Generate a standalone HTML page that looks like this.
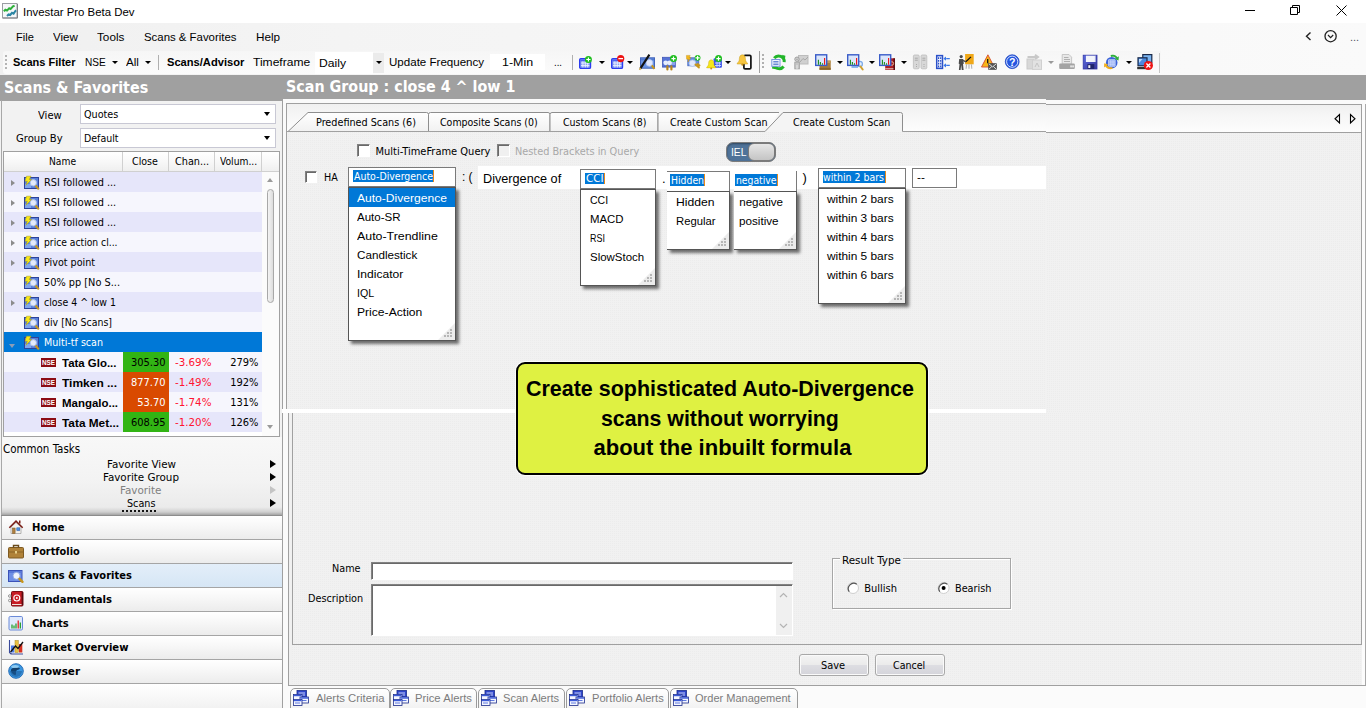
<!DOCTYPE html>
<html lang="en"><head><meta charset="utf-8"><title>Investar Pro Beta Dev</title>
<style>
html,body{margin:0;padding:0;}
body{width:1366px;height:708px;overflow:hidden;background:#f0f0f0;font-family:"Liberation Sans",Arial,sans-serif;font-size:12px;color:#000;}
#app{position:relative;width:1366px;height:708px;overflow:hidden;background:#f0f0f0;}
.a{position:absolute;box-sizing:border-box;}
.t{position:absolute;white-space:pre;transform-origin:0 50%;}
.fl{font-family:"Liberation Sans",Arial,sans-serif;}
.fd{font-family:"DejaVu Sans Condensed","Liberation Sans",Arial,sans-serif;}
svg{position:absolute;overflow:visible;}
.dot{background-color:#f1f1f1;background-image:conic-gradient(#ececec 25%,transparent 0);background-size:2px 2px;}
.dd{width:0;height:0;border-left:3px solid transparent;border-right:3px solid transparent;border-top:3px solid #000;}
.pop{background:#fff;border:1px solid #555;box-shadow:3px 3px 3px rgba(0,0,0,.55);}
.grip{position:absolute;right:0;bottom:0;width:0;height:0;border-left:17px solid transparent;border-bottom:17px solid #e4e4e4;}
.nav{height:24px;border-bottom:1px solid #a5a5a5;border-right:1px solid #a0a0a0;background:linear-gradient(#ffffff,#f7f7f7 45%,#ececec);}
.nav.sel{background:linear-gradient(#e3eef9,#d6e6f5);}
.btn{border:1px solid #a8a8a8;border-radius:3px;background:linear-gradient(#f4f4f4,#ebebeb 48%,#dddde2 52%,#d4d4da);box-shadow:inset 0 0 0 1px #fafafa;}
.sunk{background:#fff;border:1px solid;border-color:#828282 #fff #fff #828282;box-shadow:inset 1px 1px 0 #696969;}

</style></head>
<body>
<div id="app">
<div class="a " style="left:0px;top:0px;width:1366px;height:23px;background:#fff;"></div>
<svg style="left:2px;top:3px" width="16" height="16" viewBox="0 0 16 16"><rect x="0.5" y="0.5" width="14.500" height="14.500" fill="#f6f7f9" stroke="#9a9da2"/><path d="M1 15h14.500V1" fill="none" stroke="#7c7f84"/><polyline points="1.800,8.200 3.400,6.800 5,7.600 7.200,5.200 8.600,6 11,3.400 12.600,2.800" fill="none" stroke="#2eb03a" stroke-width="2"/><polyline points="5,13 6.600,11.400 8.200,12 10,9.800 11.600,10.600 13.400,8 14.200,7.400" fill="none" stroke="#2c86a4" stroke-width="2"/></svg>
<span class="t fl" style="left:23.0px;top:3.5px;font-size:11.4px;line-height:16px;">Investar Pro Beta Dev</span>
<svg style="left:1240px;top:0" width="126" height="23" viewBox="0 0 126 23" fill="none" stroke="#000" stroke-width="1"><path d="M5 10.5h10"/><path d="M50.5 7.5h7v7h-7z"/><path d="M52.5 7.5v-2h7v7h-2"/><path d="M96.5 5.5l10 10M106.5 5.5l-10 10"/></svg>
<div class="a " style="left:0px;top:23px;width:1366px;height:27px;background:linear-gradient(90deg,#f0f0f0,#f4f4f4 25%,#fafafa);"></div>
<span class="t fl" style="left:16.2px;top:28.6px;font-size:11.5px;line-height:16px;transform:scaleX(0.9605);">File</span>
<span class="t fl" style="left:53.0px;top:28.6px;font-size:11.5px;line-height:16px;transform:scaleX(1.0073);">View</span>
<span class="t fl" style="left:97.0px;top:28.6px;font-size:11.5px;line-height:16px;transform:scaleX(1.0201);">Tools</span>
<span class="t fl" style="left:143.8px;top:28.6px;font-size:11.5px;line-height:16px;transform:scaleX(0.9911);">Scans &amp; Favorites</span>
<span class="t fl" style="left:256.2px;top:28.6px;font-size:11.5px;line-height:16px;transform:scaleX(1.0188);">Help</span>
<svg style="left:1300px;top:26px" width="66" height="22" viewBox="0 0 66 22" fill="none" stroke="#222" stroke-width="1.4"><path d="M10.5 6.5l-4 3.7 4 3.7"/><circle cx="30.6" cy="10.2" r="5.6" stroke-width="1.3"/><path d="M28 9l2.6 2.6L33.200 9" stroke-width="1.2"/></svg>
<span class="t fl" style="left:1350.0px;top:29.0px;font-size:11px;line-height:16px;color:#556;">...</span>
<div class="a " style="left:0px;top:50px;width:1366px;height:25px;background:linear-gradient(90deg,#f0f0f0,#f4f4f4 25%,#fafafa);"></div>
<div class="a " style="left:3px;top:51px;width:1158px;height:23px;background:linear-gradient(#f6f6f6,#fbfbfb);border-radius:3px 0 0 3px;"></div>
<div class="a " style="left:5px;top:55px;width:2px;height:2px;background:#b4b4b4;"></div>
<div class="a " style="left:5px;top:59px;width:2px;height:2px;background:#b4b4b4;"></div>
<div class="a " style="left:5px;top:63px;width:2px;height:2px;background:#b4b4b4;"></div>
<div class="a " style="left:5px;top:67px;width:2px;height:2px;background:#b4b4b4;"></div>
<span class="t fl" style="left:12.9px;top:54.2px;font-size:11.5px;line-height:16px;font-weight:bold;transform:scaleX(0.9585);">Scans Filter</span>
<span class="t fl" style="left:85.0px;top:54.2px;font-size:11.5px;line-height:16px;transform:scaleX(0.8750);">NSE</span>
<div class="a dd" style="left:112px;top:61px;width:0px;height:0px;"></div>
<span class="t fl" style="left:126.4px;top:54.2px;font-size:11.5px;line-height:16px;transform:scaleX(1.0093);">All</span>
<div class="a dd" style="left:145px;top:61px;width:0px;height:0px;"></div>
<div class="a " style="left:158px;top:55px;width:1px;height:15px;background:#b0b0b0;"></div>
<span class="t fl" style="left:167.2px;top:54.2px;font-size:11.5px;line-height:16px;font-weight:bold;transform:scaleX(0.9674);">Scans/Advisor</span>
<span class="t fl" style="left:252.5px;top:54.2px;font-size:11.5px;line-height:16px;transform:scaleX(1.0489);">Timeframe</span>
<div class="a " style="left:315px;top:52px;width:58px;height:22px;background:#fff;"></div>
<div class="a " style="left:373px;top:53px;width:11px;height:20px;background:#ebebeb;"></div>
<span class="t fl" style="left:319.0px;top:54.6px;font-size:11.5px;line-height:16px;transform:scaleX(1.0562);">Daily</span>
<div class="a dd" style="left:376px;top:61px;width:0px;height:0px;"></div>
<span class="t fl" style="left:389.3px;top:54.2px;font-size:11.5px;line-height:16px;transform:scaleX(1.0050);">Update Frequency</span>
<div class="a " style="left:490px;top:54px;width:55px;height:16px;background:#fff;"></div>
<span class="t fl" style="left:501.8px;top:54.2px;font-size:11.5px;line-height:16px;transform:scaleX(1.0812);">1-Min</span>
<span class="t fl" style="left:553.5px;top:54.2px;font-size:11.5px;line-height:16px;transform:scaleX(0.8339);">...</span>
<div class="a " style="left:572px;top:55px;width:1px;height:15px;background:#b0b0b0;"></div>
<div class="a " style="left:759px;top:51px;width:1px;height:22px;background:#a0a0a0;"></div>
<div class="a " style="left:762px;top:54px;width:2px;height:2px;background:#b0b0b0;"></div>
<div class="a " style="left:762px;top:58px;width:2px;height:2px;background:#b0b0b0;"></div>
<div class="a " style="left:762px;top:62px;width:2px;height:2px;background:#b0b0b0;"></div>
<div class="a " style="left:762px;top:66px;width:2px;height:2px;background:#b0b0b0;"></div>
<div class="a " style="left:1159px;top:53px;width:1px;height:20px;background:#c6c6c6;"></div>
<div class="a dd" style="left:598.5px;top:61px;width:0px;height:0px;"></div>
<div class="a dd" style="left:626.5px;top:61px;width:0px;height:0px;"></div>
<div class="a dd" style="left:724.7px;top:61px;width:0px;height:0px;"></div>
<div class="a dd" style="left:836.5px;top:61px;width:0px;height:0px;"></div>
<div class="a dd" style="left:868.5px;top:61px;width:0px;height:0px;"></div>
<div class="a dd" style="left:900.5px;top:61px;width:0px;height:0px;"></div>
<div class="a dd" style="left:1125.5px;top:61px;width:0px;height:0px;"></div>
<div class="a dd" style="left:1047.5px;top:61px;width:0px;height:0px;border-top-color:#9a9a9a;"></div>
<svg style="left:579px;top:54px" width="16" height="16" viewBox="0 0 16 16"><rect x="0.7" y="4.6" width="10.8" height="9.8" rx="1.2" fill="#8aa2f4" stroke="#2b3cf0" stroke-width="1.4"/><path d="M1.400 6.300h9.400" stroke="#4a62f0" stroke-width="1.600"/><path d="M2 9h8.400M2 11.600h8.400M3.900 7.400v6M6.300 7.400v6M8.700 7.400v6" stroke="#eef3ff" stroke-width=".9"/><circle cx="9.4" cy="5.5" r="3.5" fill="#1fbe1f"/><path d="M7.300000000000001 5.5h4.2M9.4 3.4v4.2" stroke="#fff" stroke-width="1.15"/></svg>
<svg style="left:611px;top:54px" width="16" height="16" viewBox="0 0 16 16"><rect x="0.7" y="4.6" width="10.8" height="9.8" rx="1.2" fill="#8aa2f4" stroke="#2b3cf0" stroke-width="1.4"/><path d="M1.400 6.300h9.400" stroke="#4a62f0" stroke-width="1.600"/><path d="M2 9h8.400M2 11.600h8.400M3.900 7.400v6M6.300 7.400v6M8.700 7.400v6" stroke="#eef3ff" stroke-width=".9"/><circle cx="9.7" cy="4.6" r="3.6" fill="#ee1212"/><path d="M7.3999999999999995 4.6h4.6" stroke="#fff" stroke-width="1.3"/></svg>
<svg style="left:639px;top:54px" width="16" height="16" viewBox="0 0 16 16"><rect x="1.5" y="3.8" width="14" height="10.400" fill="#6a94e4" stroke="#4465b8"/><rect x="2" y="4.300" width="13" height="2" fill="#5078d0"/><circle cx="10.400" cy="8.900" r="3.300" fill="#e2e9fc" stroke="#b6c8f0" stroke-width=".8"/><path d="M12.800 11.400l2.600 3.500" stroke="#c8961c" stroke-width="2.100"/><path d="M1.300 14.600L10.400 0.600" stroke="#111" stroke-width="2.100"/><path d="M0.500 15.800l1.200-1.900" stroke="#c8a040" stroke-width="1.600"/></svg>
<svg style="left:662px;top:54px" width="16" height="16" viewBox="0 0 16 16"><rect x="0.500" y="3.300" width="12.800" height="9.800" fill="#5673d6" stroke="#4058b8" stroke-width=".8"/><rect x="8" y="6" width="5" height="5" fill="#8aa4ea"/><circle cx="3.700" cy="8.800" r="2.400" fill="#e8eefc"/><circle cx="7.500" cy="8.800" r="2.400" fill="#e8eefc"/><path d="M5.400 12.300v3.200M9.400 12.300v3.200" stroke="#b8861c" stroke-width="2.200" stroke-linecap="round"/><circle cx="11.5" cy="4.6" r="3.5" fill="#1fbe1f"/><path d="M9.4 4.6h4.2M11.5 2.4999999999999996v4.2" stroke="#fff" stroke-width="1.15"/></svg>
<svg style="left:686px;top:54px" width="16" height="16" viewBox="0 0 16 16"><rect x="1.800" y="3.800" width="11" height="8" fill="#6a8fe0" stroke="#4668c0" stroke-width=".8"/><circle cx="6.400" cy="9.200" r="3.300" fill="#e3eafb" stroke="#a9c0ea" stroke-width=".8"/><path d="M0.400 1.400h3.800l-1 2h1.800L1.800 8l.8-2.800H0.600z" fill="#f4b81c" stroke="#c08a10" stroke-width=".4"/><path d="M9.500 10.500l3.400 3M11.500 10l2 1.500" stroke="#c8961c" stroke-width="1.900" stroke-linecap="round"/><circle cx="11.6" cy="3.8" r="2.9" fill="#1fbe1f"/><path d="M9.5 3.8h4.2M11.6 1.6999999999999997v4.2" stroke="#fff" stroke-width="1.15"/></svg>
<svg style="left:706px;top:54px" width="16" height="16" viewBox="0 0 16 16"><rect x="7.600" y="4.300" width="8.300" height="9.400" rx="1" fill="#3a52e8"/><path d="M9 9h6M9 11.500h6M11 7.500v5.500M13.300 7.500v5.500" stroke="#cfe0ff" stroke-width=".9"/><g transform="translate(0.7,5.6) scale(0.9)"><path d="M5 0.300c1.900 0 2.900 1.500 2.900 3.600 0 2.400.8 3.400 2.100 4.400v.9H0v-.9c1.300-1 2.100-2 2.100-4.400C2.100 1.800 3.100.3 5 .3z" fill="#f5e71a" stroke="#c09a10" stroke-width=".4"/><circle cx="5" cy="9.800" r="1.100" fill="#c8901c"/></g><circle cx="12.5" cy="4.6" r="3.5" fill="#1fbe1f"/><path d="M10.4 4.6h4.2M12.5 2.4999999999999996v4.2" stroke="#fff" stroke-width="1.15"/></svg>
<svg style="left:737px;top:54px" width="16" height="16" viewBox="0 0 16 16"><rect x="6.900" y="1.300" width="7" height="13.600" rx="1.200" fill="#fff" stroke="#111" stroke-width="1.700"/><g transform="translate(0.2,0.5) scale(1.04)"><path d="M5 0.300c1.900 0 2.900 1.500 2.900 3.600 0 2.400.8 3.400 2.100 4.400v.9H0v-.9c1.300-1 2.100-2 2.100-4.400C2.100 1.800 3.100.3 5 .3z" fill="#f6c540" stroke="#c09a10" stroke-width=".4"/><circle cx="5" cy="9.800" r="1.100" fill="#c8901c"/></g></svg>
<svg style="left:771px;top:54px" width="16" height="16" viewBox="0 0 16 16"><path d="M13.200 8.200A5.600 5.600 0 0 0 3.200 4.200" fill="none" stroke="#22b52a" stroke-width="3"/><path d="M10.800 0.800l3.600 1-0.600 4.200z" fill="#22b52a"/><path d="M2.600 9A5.600 5.600 0 0 0 12.600 12.500" fill="none" stroke="#22b52a" stroke-width="3"/><path d="M4.800 15.200l-3.800-.6.600-4.200z" fill="#22b52a"/><rect x="0.800" y="5.500" width="8.200" height="6.800" fill="#f2f5fd" stroke="#7a96e0"/><path d="M2.300 7.500h5.200M2.300 9h5.200M2.300 10.500h5.200" stroke="#5b7ed0" stroke-width=".9"/></svg>
<svg style="left:794px;top:54px" width="16" height="16" viewBox="0 0 16 16"><rect x="4.500" y="1.500" width="9.500" height="8.500" fill="#d0d0d0" stroke="#bcbcbc"/><path d="M6 8l3-3.500 2 1.500 3-3" stroke="#a8a8a8" fill="none"/><circle cx="3" cy="5.200" r="2.200" fill="#d6d6d6" stroke="#9c9c9c"/><circle cx="3" cy="5.200" r=".8" fill="#9c9c9c"/><rect x="0.800" y="8.200" width="4.600" height="6.600" fill="#c6c6c6" stroke="#a8a8a8"/><path d="M3 11v4" stroke="#e8e8e8"/></svg>
<svg style="left:815px;top:54px" width="16" height="16" viewBox="0 0 16 16"><rect x="4.500" y="6.600" width="11.200" height="9.200" fill="#a87c3a"/><rect x="4.500" y="6.600" width="11.200" height="2.400" fill="#c09a5a"/><rect x="4.500" y="13.800" width="11.200" height="2" fill="#8a6428"/><rect x="0.700" y="0.800" width="11" height="10.600" fill="#dbe6fb" stroke="#3a5cc8" stroke-width="1.400"/><path d="M3.400 10.700V5.800M5.400 10.700V8M7.500 10.700V9.200" stroke="#1a8c1a" stroke-width="1.100"/><path d="M9.600 10.700V4" stroke="#ee1010" stroke-width="1.100"/></svg>
<svg style="left:847px;top:54px" width="16" height="16" viewBox="0 0 16 16"><rect x="4.500" y="11.800" width="6.500" height="2.200" fill="#8ab8ee"/><circle cx="12.800" cy="10" r="2.600" fill="#e2eefc" stroke="#7aa8e8" stroke-width="1.200"/><path d="M13.500 12.500l2.200 3" stroke="#d0a030" stroke-width="2" stroke-linecap="round"/><rect x="0.700" y="0.800" width="11" height="10.600" fill="#dbe6fb" stroke="#3a5cc8" stroke-width="1.400"/><path d="M3.400 10.700V5.800M5.400 10.700V8M7.500 10.700V9.200" stroke="#1a8c1a" stroke-width="1.100"/><path d="M9.600 10.700V4" stroke="#ee1010" stroke-width="1.100"/></svg>
<svg style="left:879px;top:54px" width="16" height="16" viewBox="0 0 16 16"><rect x="6.200" y="4.300" width="9.600" height="11.700" fill="#b01c24"/><rect x="14.400" y="4.300" width="1.600" height="11.700" fill="#5a0c10"/><circle cx="12.800" cy="9.500" r="1.800" fill="none" stroke="#f0c8a0" stroke-width=".9"/><rect x="6.200" y="14.300" width="8.200" height="1" fill="#e8d8c8"/><rect x="0.700" y="0.800" width="11" height="10.600" fill="#dbe6fb" stroke="#3a5cc8" stroke-width="1.400"/><path d="M3.400 10.700V5.800M5.400 10.700V8M7.500 10.700V9.200" stroke="#1a8c1a" stroke-width="1.100"/><path d="M9.600 10.700V4" stroke="#ee1010" stroke-width="1.100"/></svg>
<svg style="left:913px;top:54px" width="16" height="16" viewBox="0 0 16 16"><rect x="0.400" y="1" width="5.800" height="13.800" rx="1.200" fill="#d8d8d8" stroke="#bdbdbd" stroke-width=".8"/><rect x="8" y="1" width="5.800" height="13.800" rx="1.200" fill="#d8d8d8" stroke="#bdbdbd" stroke-width=".8"/><path d="M1.800 4.200h3M1.800 6.200h3M9.400 4.200h3M9.400 6.200h3" stroke="#a8a8a8"/><path d="M3 10.500h.8M3 12.500h.8M10.600 10.500h.8M10.600 12.500h.8" stroke="#a0a0a0"/></svg>
<svg style="left:936px;top:54px" width="16" height="16" viewBox="0 0 16 16"><rect x="0.700" y="1.600" width="5.800" height="12.800" fill="#f0f4ff" stroke="#2a50c8" stroke-width="1.500"/><path d="M2.600 3.200v10M4.700 3.200v10" stroke="#2a50c8" stroke-width="1.200" stroke-dasharray="1.700 1.100"/><path d="M13.800 4.600h-5.500M13.800 11.400h-5.500" stroke="#3b78e8" stroke-width="1.200" stroke-dasharray="3.600 1 1 1"/><path d="M10 2.400L7.400 4.600 10 6.800zM10 9.200l-2.600 2.200 2.600 2.200z" fill="#3b78e8"/></svg>
<svg style="left:958px;top:54px" width="16" height="16" viewBox="0 0 16 16"><rect x="7.100" y="0" width="8.600" height="10.300" fill="#f0a818"/><path d="M7.800 7.700l5.200-4.800" stroke="#111" stroke-width="1.200"/><path d="M8.600 10.300l-.5 4.500M11 10.300v4.500M13.400 10.300l.4 4.500" stroke="#b4b4b4" stroke-width="1.100"/><circle cx="3.200" cy="2.600" r="1.600" fill="#4a4a4a"/><path d="M1.200 5h4l.6 4.800-.8.200.6 6H3.800l-.6-5-.6 5H0.900l.6-6-.8-.2z" fill="#4a4a4a"/><path d="M5 6.300l3 1.500" stroke="#4a4a4a" stroke-width="1.300"/></svg>
<svg style="left:981px;top:54px" width="16" height="16" viewBox="0 0 16 16"><path d="M6.900 0.800L13.200 13H0.500z" fill="#f7b518" stroke="#d8583a" stroke-width="1" stroke-linejoin="round"/><path d="M6.700 5v4.300" stroke="#111" stroke-width="1.300"/><rect x="7.600" y="9.500" width="8" height="6" fill="#555" stroke="#444" stroke-width=".6"/><path d="M7.800 9.700l3.800 3.200 3.800-3.200M7.800 15.300l3-2.800M15.400 15.300l-3-2.800" fill="none" stroke="#fff" stroke-width=".8"/></svg>
<svg style="left:1004px;top:54px" width="16" height="16" viewBox="0 0 16 16"><circle cx="8.200" cy="7.700" r="6.900" fill="#2456e0" stroke="#1c44c0" stroke-width=".8"/><circle cx="8.200" cy="7.700" r="5.600" fill="none" stroke="#e8eeff" stroke-width=".9"/><text x="8.200" y="11.500" text-anchor="middle" font-family="Liberation Sans" font-weight="bold" font-size="10.500" fill="#fff">?</text></svg>
<svg style="left:1026px;top:54px" width="16" height="16" viewBox="0 0 16 16"><path d="M1.500 3h9.500M9 0.800l3 2.200-3 2.200" fill="none" stroke="#c8c8c8" stroke-width="2"/><rect x="1" y="5" width="7" height="10" fill="#d8d8d8" stroke="#cacaca"/><rect x="6.500" y="6" width="9" height="9.400" fill="#e2e2e2" stroke="#d0d0d0"/><path d="M9 13l2-4 2 4" fill="none" stroke="#c4c4c4"/></svg>
<svg style="left:1059px;top:54px" width="16" height="16" viewBox="0 0 16 16"><path d="M3.200 0.500h6.800l2.600 2.600v7H3.200z" fill="#e8e8e8" stroke="#bcbcbc" stroke-width=".8"/><path d="M5 3.500h4.500M5 5.500h6M5 7.500h6" stroke="#b0b0b0"/><rect x="0.200" y="9.600" width="15.600" height="5.400" rx="1" fill="#a4a4a4"/><rect x="11.400" y="11.400" width="1.300" height="2" fill="#fff"/><rect x="13.400" y="11.400" width="1.300" height="2" fill="#fff"/></svg>
<svg style="left:1082px;top:54px" width="16" height="16" viewBox="0 0 16 16"><defs><linearGradient id="fg" x1="0" y1="0" x2="1" y2="1"><stop offset="0" stop-color="#5a6ae0"/><stop offset="1" stop-color="#3a389c"/></linearGradient></defs><rect x="1.200" y="1.200" width="13.800" height="13.800" fill="url(#fg)" stroke="#3238a8" stroke-width=".8"/><rect x="3.900" y="1.700" width="9.500" height="6.300" fill="#f2f4fb"/><path d="M13.400 1.700v6.300" stroke="#a8b0e0"/><rect x="5.500" y="10.100" width="6.800" height="4.800" fill="#20246a"/><rect x="6.300" y="11.200" width="2" height="2.800" fill="#f0f0f8"/></svg>
<svg style="left:1104px;top:54px" width="16" height="16" viewBox="0 0 16 16"><circle cx="7.700" cy="8.700" r="5.800" fill="#3a62d8"/><path d="M4.700 5.800h6.400v6.400H4.700zM4.700 8h6.400M4.700 10.100h6.400M6.900 5.800v6.400M9 5.800v6.400" fill="#6a8cf0" stroke="#e4ecff" stroke-width=".8"/><path d="M6.500 1.300c3.200-1.100 5.600-.2 6.900 1.900l1.500-.9-.4 4.200-3.700-1.400 1.200-.9c-.9-1.300-2.500-1.900-4.900-1.300z" fill="#2eb03a"/><path d="M0.200 9.200l3.800 1.100-1.100 1c1 1.500 3 2.300 5.500 2v1.800c-3.500.6-6-.7-7.100-2.600l-1.300 1z" fill="#f0b020"/></svg>
<svg style="left:1137px;top:54px" width="16" height="16" viewBox="0 0 16 16"><rect x="5.800" y="0.600" width="9" height="8.400" fill="#7ab4f0" stroke="#1a2a4a" stroke-width="1.200"/><rect x="1" y="3.800" width="9" height="8" fill="#4a8ae0" stroke="#1a2a4a" stroke-width="1.200"/><path d="M2 5l3.500 0-3.500 4z" fill="#bcd8f8"/><rect x="0.200" y="13" width="10.800" height="2.200" fill="#333"/><circle cx="11.400" cy="11.500" r="4.600" fill="#ee1414"/><path d="M9.400 9.500l4 4M13.400 9.500l-4 4" stroke="#fff" stroke-width="1.300"/></svg>
<div class="a " style="left:0px;top:75px;width:1046px;height:24px;background:#a0a0a0;"></div>
<div class="a " style="left:1046px;top:75px;width:320px;height:25px;background:#a0a0a0;"></div>
<span class="t fd" style="left:4.0px;top:77.0px;font-size:15.9px;line-height:22px;font-weight:bold;color:#fff;">Scans &amp; Favorites</span>
<span class="t fd" style="left:286.0px;top:76.0px;font-size:15.9px;line-height:22px;font-weight:bold;color:#fff;">Scan Group : close 4 ^ low 1</span>
<div class="a " style="left:0px;top:99px;width:283px;height:609px;background:#f2f2f2;"></div>
<div class="a " style="left:0px;top:99px;width:283px;height:2px;background:#a0a0a0;"></div>
<div class="a " style="left:1px;top:100px;width:1px;height:608px;background:#a8a8a8;"></div>
<div class="a " style="left:282px;top:99px;width:1px;height:609px;background:#a0a0a0;"></div>
<span class="t fd" style="left:38.2px;top:108.3px;font-size:11px;line-height:16px;transform:scaleX(1.0141);">View</span>
<div class="a " style="left:80px;top:104px;width:196px;height:20px;background:#fff;border:1px solid #c8c8d4;"></div>
<span class="t fd" style="left:84.0px;top:106.6px;font-size:11px;line-height:16px;transform:scaleX(0.9730);">Quotes</span>
<div class="a" style="left:264px;top:112px;width:0;height:0;border-left:3.5px solid transparent;border-right:3.5px solid transparent;border-top:4px solid #000"></div>
<span class="t fd" style="left:16.0px;top:131.3px;font-size:11px;line-height:16px;transform:scaleX(1.0155);">Group By</span>
<div class="a " style="left:80px;top:128px;width:196px;height:20px;background:#fff;border:1px solid #c8c8d4;"></div>
<span class="t fd" style="left:84.0px;top:130.6px;font-size:11px;line-height:16px;transform:scaleX(0.9538);">Default</span>
<div class="a" style="left:264px;top:136px;width:0;height:0;border-left:3.5px solid transparent;border-right:3.5px solid transparent;border-top:4px solid #000"></div>
<div class="a " style="left:3px;top:151px;width:277px;height:286px;background:#fff;border:1px solid #a0a0a0;"></div>
<div class="a " style="left:4px;top:152px;width:275px;height:20px;background:linear-gradient(#ffffff,#f8f8f8 50%,#efefef);border-bottom:1px solid #d0d0d0;"></div>
<div class="a " style="left:122px;top:152px;width:1px;height:19px;background:#d0d0d0;"></div>
<div class="a " style="left:168px;top:152px;width:1px;height:19px;background:#d0d0d0;"></div>
<div class="a " style="left:214px;top:152px;width:1px;height:19px;background:#d0d0d0;"></div>
<div class="a " style="left:261px;top:152px;width:1px;height:19px;background:#d0d0d0;"></div>
<span class="t fd" style="left:49.3px;top:154.1px;font-size:11px;line-height:16px;transform:scaleX(0.9280);">Name</span>
<span class="t fd" style="left:132.3px;top:154.1px;font-size:11px;line-height:16px;transform:scaleX(0.9604);">Close</span>
<span class="t fd" style="left:174.5px;top:154.1px;font-size:11px;line-height:16px;transform:scaleX(0.9785);">Chan...</span>
<span class="t fd" style="left:219.7px;top:154.1px;font-size:11px;line-height:16px;transform:scaleX(0.9285);">Volum...</span>
<div class="a " style="left:262px;top:172px;width:17px;height:264px;background:#fbfbfb;"></div>
<div class="a " style="left:4px;top:172px;width:258px;height:20px;background:#e6e6fa;"></div>
<div class="a" style="left:11px;top:179.5px;width:0;height:0;border-top:3px solid transparent;border-bottom:3px solid transparent;border-left:4px solid #8c8c8c"></div>
<svg style="left:24px;top:175px" width="16" height="16" viewBox="0 0 16 16"><rect x="0.5" y="2.5" width="14" height="11" fill="#5a80d8" stroke="#2c429c"/><rect x="1" y="9" width="6" height="4" fill="#80a6ec"/><circle cx="9.3" cy="7.8" r="3.2" fill="#e4ebfb" stroke="#a8bce8"/><path d="M11.5 10.5l3.3 3.8" stroke="#c8961c" stroke-width="2"/><path d="M2.5 1.2h4.5L5.200 4.500h2.300L2 10.200l1.300-4H1z" fill="#f7e818" stroke="#a89a10" stroke-width=".5"/></svg>
<span class="t fd" style="left:43.5px;top:174.8px;font-size:11px;line-height:16px;transform:scaleX(0.9844);">RSI followed ...</span>
<div class="a " style="left:4px;top:192px;width:258px;height:20px;background:#f6f6fd;"></div>
<div class="a" style="left:11px;top:199.5px;width:0;height:0;border-top:3px solid transparent;border-bottom:3px solid transparent;border-left:4px solid #8c8c8c"></div>
<svg style="left:24px;top:195px" width="16" height="16" viewBox="0 0 16 16"><rect x="0.5" y="2.5" width="14" height="11" fill="#5a80d8" stroke="#2c429c"/><rect x="1" y="9" width="6" height="4" fill="#80a6ec"/><circle cx="9.3" cy="7.8" r="3.2" fill="#e4ebfb" stroke="#a8bce8"/><path d="M11.5 10.5l3.3 3.8" stroke="#c8961c" stroke-width="2"/><path d="M2.5 1.2h4.5L5.200 4.500h2.300L2 10.200l1.300-4H1z" fill="#f7e818" stroke="#a89a10" stroke-width=".5"/></svg>
<span class="t fd" style="left:43.5px;top:194.8px;font-size:11px;line-height:16px;transform:scaleX(0.9844);">RSI followed ...</span>
<div class="a " style="left:4px;top:212px;width:258px;height:20px;background:#e6e6fa;"></div>
<div class="a" style="left:11px;top:219.5px;width:0;height:0;border-top:3px solid transparent;border-bottom:3px solid transparent;border-left:4px solid #8c8c8c"></div>
<svg style="left:24px;top:215px" width="16" height="16" viewBox="0 0 16 16"><rect x="0.5" y="2.5" width="14" height="11" fill="#5a80d8" stroke="#2c429c"/><rect x="1" y="9" width="6" height="4" fill="#80a6ec"/><circle cx="9.3" cy="7.8" r="3.2" fill="#e4ebfb" stroke="#a8bce8"/><path d="M11.5 10.5l3.3 3.8" stroke="#c8961c" stroke-width="2"/><path d="M2.5 1.2h4.5L5.200 4.500h2.300L2 10.200l1.300-4H1z" fill="#f7e818" stroke="#a89a10" stroke-width=".5"/></svg>
<span class="t fd" style="left:43.5px;top:214.8px;font-size:11px;line-height:16px;transform:scaleX(0.9844);">RSI followed ...</span>
<div class="a " style="left:4px;top:232px;width:258px;height:20px;background:#f6f6fd;"></div>
<div class="a" style="left:11px;top:239.5px;width:0;height:0;border-top:3px solid transparent;border-bottom:3px solid transparent;border-left:4px solid #8c8c8c"></div>
<svg style="left:24px;top:235px" width="16" height="16" viewBox="0 0 16 16"><rect x="0.5" y="2.5" width="14" height="11" fill="#5a80d8" stroke="#2c429c"/><rect x="1" y="9" width="6" height="4" fill="#80a6ec"/><circle cx="9.3" cy="7.8" r="3.2" fill="#e4ebfb" stroke="#a8bce8"/><path d="M11.5 10.5l3.3 3.8" stroke="#c8961c" stroke-width="2"/><path d="M2.5 1.2h4.5L5.200 4.500h2.300L2 10.200l1.300-4H1z" fill="#f7e818" stroke="#a89a10" stroke-width=".5"/></svg>
<span class="t fd" style="left:43.5px;top:234.8px;font-size:11px;line-height:16px;transform:scaleX(0.9304);">price action cl...</span>
<div class="a " style="left:4px;top:252px;width:258px;height:20px;background:#e6e6fa;"></div>
<div class="a" style="left:11px;top:259.5px;width:0;height:0;border-top:3px solid transparent;border-bottom:3px solid transparent;border-left:4px solid #8c8c8c"></div>
<svg style="left:24px;top:255px" width="16" height="16" viewBox="0 0 16 16"><rect x="0.5" y="2.5" width="14" height="11" fill="#5a80d8" stroke="#2c429c"/><rect x="1" y="9" width="6" height="4" fill="#80a6ec"/><circle cx="9.3" cy="7.8" r="3.2" fill="#e4ebfb" stroke="#a8bce8"/><path d="M11.5 10.5l3.3 3.8" stroke="#c8961c" stroke-width="2"/><path d="M2.5 1.2h4.5L5.200 4.500h2.300L2 10.200l1.300-4H1z" fill="#f7e818" stroke="#a89a10" stroke-width=".5"/></svg>
<span class="t fd" style="left:43.5px;top:254.8px;font-size:11px;line-height:16px;transform:scaleX(0.9685);">Pivot point</span>
<div class="a " style="left:4px;top:272px;width:258px;height:20px;background:#f6f6fd;"></div>
<svg style="left:24px;top:275px" width="16" height="16" viewBox="0 0 16 16"><rect x="0.5" y="2.5" width="14" height="11" fill="#5a80d8" stroke="#2c429c"/><rect x="1" y="9" width="6" height="4" fill="#80a6ec"/><circle cx="9.3" cy="7.8" r="3.2" fill="#e4ebfb" stroke="#a8bce8"/><path d="M11.5 10.5l3.3 3.8" stroke="#c8961c" stroke-width="2"/><path d="M2.5 1.2h4.5L5.200 4.500h2.300L2 10.200l1.300-4H1z" fill="#f7e818" stroke="#a89a10" stroke-width=".5"/></svg>
<span class="t fd" style="left:43.5px;top:274.8px;font-size:11px;line-height:16px;transform:scaleX(0.9866);">50% pp [No S...</span>
<div class="a " style="left:4px;top:292px;width:258px;height:20px;background:#e6e6fa;"></div>
<div class="a" style="left:11px;top:299.5px;width:0;height:0;border-top:3px solid transparent;border-bottom:3px solid transparent;border-left:4px solid #8c8c8c"></div>
<svg style="left:24px;top:295px" width="16" height="16" viewBox="0 0 16 16"><rect x="0.5" y="2.5" width="14" height="11" fill="#5a80d8" stroke="#2c429c"/><rect x="1" y="9" width="6" height="4" fill="#80a6ec"/><circle cx="9.3" cy="7.8" r="3.2" fill="#e4ebfb" stroke="#a8bce8"/><path d="M11.5 10.5l3.3 3.8" stroke="#c8961c" stroke-width="2"/><path d="M2.5 1.2h4.5L5.200 4.500h2.300L2 10.200l1.300-4H1z" fill="#f7e818" stroke="#a89a10" stroke-width=".5"/></svg>
<span class="t fd" style="left:43.5px;top:294.8px;font-size:11px;line-height:16px;transform:scaleX(0.9493);">close 4 ^ low 1</span>
<div class="a " style="left:4px;top:312px;width:258px;height:20px;background:#f6f6fd;"></div>
<svg style="left:24px;top:315px" width="16" height="16" viewBox="0 0 16 16"><rect x="0.5" y="2.5" width="14" height="11" fill="#5a80d8" stroke="#2c429c"/><rect x="1" y="9" width="6" height="4" fill="#80a6ec"/><circle cx="9.3" cy="7.8" r="3.2" fill="#e4ebfb" stroke="#a8bce8"/><path d="M11.5 10.5l3.3 3.8" stroke="#c8961c" stroke-width="2"/><path d="M2.5 1.2h4.5L5.200 4.500h2.300L2 10.200l1.300-4H1z" fill="#f7e818" stroke="#a89a10" stroke-width=".5"/></svg>
<span class="t fd" style="left:43.5px;top:314.8px;font-size:11px;line-height:16px;transform:scaleX(0.9500);">div [No Scans]</span>
<div class="a " style="left:4px;top:332px;width:258px;height:20px;background:#0078d7;"></div>
<div class="a" style="left:9px;top:344px;width:0;height:0;border-left:3.500px solid transparent;border-right:3.500px solid transparent;border-top:4px solid #8a9db8"></div>
<svg style="left:24px;top:335px" width="16" height="16" viewBox="0 0 16 16"><rect x="0.5" y="2.5" width="14" height="11" fill="#5a80d8" stroke="#2c429c"/><rect x="1" y="9" width="6" height="4" fill="#80a6ec"/><circle cx="9.3" cy="7.8" r="3.2" fill="#e4ebfb" stroke="#a8bce8"/><path d="M11.5 10.5l3.3 3.8" stroke="#c8961c" stroke-width="2"/><path d="M2.5 1.2h4.5L5.200 4.500h2.300L2 10.200l1.300-4H1z" fill="#f7e818" stroke="#a89a10" stroke-width=".5"/></svg>
<span class="t fd" style="left:43.5px;top:334.8px;font-size:11px;line-height:16px;color:#fff;transform:scaleX(0.9640);">Multi-tf scan</span>
<div class="a " style="left:4px;top:352px;width:258px;height:20px;background:#f6f6fd;"></div>
<svg style="left:41px;top:358px" width="15" height="9" viewBox="0 0 15 9"><rect x="0" y="0" width="15" height="9" fill="#8c0c14"/><text x="7.500" y="7.300" text-anchor="middle" font-family="Liberation Sans" font-weight="bold" font-size="7.500" fill="#fff" textLength="13" lengthAdjust="spacingAndGlyphs">NSE</text></svg>
<span class="t fl" style="left:62.0px;top:354.6px;font-size:10.6px;line-height:16px;font-weight:bold;transform:scaleX(1.0805);">Tata Glo...</span>
<div class="a " style="left:123px;top:352px;width:46px;height:20px;background:#32b414;"></div>
<span class="t fd" style="left:130.9px;top:354.8px;font-size:11px;line-height:16px;">305.30</span>
<span class="t fd" style="left:175.0px;top:354.8px;font-size:11px;line-height:16px;color:#ff1432;transform:scaleX(1.0424);">-3.69%</span>
<span class="t fd" style="left:230.2px;top:354.8px;font-size:11px;line-height:16px;">279%</span>
<div class="a " style="left:4px;top:372px;width:258px;height:20px;background:#e6e6fa;"></div>
<svg style="left:41px;top:378px" width="15" height="9" viewBox="0 0 15 9"><rect x="0" y="0" width="15" height="9" fill="#8c0c14"/><text x="7.500" y="7.300" text-anchor="middle" font-family="Liberation Sans" font-weight="bold" font-size="7.500" fill="#fff" textLength="13" lengthAdjust="spacingAndGlyphs">NSE</text></svg>
<span class="t fl" style="left:62.0px;top:374.6px;font-size:10.6px;line-height:16px;font-weight:bold;transform:scaleX(1.1300);">Timken ...</span>
<div class="a " style="left:123px;top:372px;width:46px;height:20px;background:#d94a00;"></div>
<span class="t fd" style="left:130.9px;top:374.8px;font-size:11px;line-height:16px;color:#fff;">877.70</span>
<span class="t fd" style="left:175.0px;top:374.8px;font-size:11px;line-height:16px;color:#ff1432;transform:scaleX(1.0424);">-1.49%</span>
<span class="t fd" style="left:230.2px;top:374.8px;font-size:11px;line-height:16px;">192%</span>
<div class="a " style="left:4px;top:392px;width:258px;height:20px;background:#f6f6fd;"></div>
<svg style="left:41px;top:398px" width="15" height="9" viewBox="0 0 15 9"><rect x="0" y="0" width="15" height="9" fill="#8c0c14"/><text x="7.500" y="7.300" text-anchor="middle" font-family="Liberation Sans" font-weight="bold" font-size="7.500" fill="#fff" textLength="13" lengthAdjust="spacingAndGlyphs">NSE</text></svg>
<span class="t fl" style="left:62.0px;top:394.6px;font-size:10.6px;line-height:16px;font-weight:bold;transform:scaleX(1.0811);">Mangalo...</span>
<div class="a " style="left:123px;top:392px;width:46px;height:20px;background:#d94a00;"></div>
<span class="t fd" style="left:137.2px;top:394.8px;font-size:11px;line-height:16px;color:#fff;">53.70</span>
<span class="t fd" style="left:175.0px;top:394.8px;font-size:11px;line-height:16px;color:#ff1432;transform:scaleX(1.0424);">-1.74%</span>
<span class="t fd" style="left:230.2px;top:394.8px;font-size:11px;line-height:16px;">131%</span>
<div class="a " style="left:4px;top:412px;width:258px;height:20px;background:#e6e6fa;"></div>
<svg style="left:41px;top:418px" width="15" height="9" viewBox="0 0 15 9"><rect x="0" y="0" width="15" height="9" fill="#8c0c14"/><text x="7.500" y="7.300" text-anchor="middle" font-family="Liberation Sans" font-weight="bold" font-size="7.500" fill="#fff" textLength="13" lengthAdjust="spacingAndGlyphs">NSE</text></svg>
<span class="t fl" style="left:62.0px;top:414.6px;font-size:10.6px;line-height:16px;font-weight:bold;transform:scaleX(1.1173);">Tata Met...</span>
<div class="a " style="left:123px;top:412px;width:46px;height:20px;background:#32b414;"></div>
<span class="t fd" style="left:130.9px;top:414.8px;font-size:11px;line-height:16px;">608.95</span>
<span class="t fd" style="left:175.0px;top:414.8px;font-size:11px;line-height:16px;color:#ff1432;transform:scaleX(1.0424);">-1.20%</span>
<span class="t fd" style="left:230.2px;top:414.8px;font-size:11px;line-height:16px;">126%</span>
<div class="a" style="left:267px;top:178px;width:0;height:0;border-left:3.500px solid transparent;border-right:3.500px solid transparent;border-bottom:4px solid #9a9a9a"></div>
<div class="a " style="left:267px;top:189px;width:7px;height:114px;border:1px solid #a8a8a8;border-radius:3.500px;background:linear-gradient(90deg,#f4f4f4,#dcdcdc);"></div>
<div class="a" style="left:267px;top:425px;width:0;height:0;border-left:3.500px solid transparent;border-right:3.500px solid transparent;border-top:4px solid #9a9a9a"></div>
<div class="a " style="left:2px;top:437px;width:280px;height:78px;background:linear-gradient(#f8f8f8,#f3f3f3 55%,#ebebeb 90%,#d0d0d0 96%,#a4a4a4);"></div>
<span class="t fd" style="left:3.2px;top:441.1px;font-size:11.5px;line-height:16px;transform:scaleX(0.9958);">Common Tasks</span>
<span class="t fd" style="left:107.2px;top:456.8px;font-size:11px;line-height:16px;transform:scaleX(1.0447);">Favorite View</span>
<span class="t fd" style="left:103.4px;top:469.8px;font-size:11px;line-height:16px;transform:scaleX(1.0456);">Favorite Group</span>
<span class="t fd" style="left:120.4px;top:482.8px;font-size:11px;line-height:16px;color:#808080;transform:scaleX(1.0493);">Favorite</span>
<span class="t fd" style="left:127.0px;top:495.8px;font-size:11px;line-height:16px;transform:scaleX(0.9720);">Scans</span>
<div class="a " style="left:122px;top:510px;width:35px;height:2px;background:repeating-linear-gradient(90deg,#111 0 2px,transparent 2px 4px);"></div>
<div class="a" style="left:270px;top:459.5px;width:0;height:0;border-top:4.500px solid transparent;border-bottom:4.500px solid transparent;border-left:6px solid #000"></div>
<div class="a" style="left:270px;top:472.5px;width:0;height:0;border-top:4.500px solid transparent;border-bottom:4.500px solid transparent;border-left:6px solid #000"></div>
<div class="a" style="left:270px;top:485.5px;width:0;height:0;border-top:4.500px solid transparent;border-bottom:4.500px solid transparent;border-left:6px solid #c4c4c4"></div>
<div class="a" style="left:270px;top:498.5px;width:0;height:0;border-top:4.500px solid transparent;border-bottom:4.500px solid transparent;border-left:6px solid #000"></div>
<div class="a " style="left:1px;top:515px;width:281px;height:1px;background:#8c8c8c;"></div>
<div class="a nav" style="left:2px;top:516px;width:281px;height:24px;"></div>
<svg style="left:8px;top:519px" width="16" height="16" viewBox="0 0 16 16"><path d="M3 8v6.500h10V8L8 3.500z" fill="#f6f4ee" stroke="#9a9a9a" stroke-width=".7"/><path d="M3.500 10h9M3.500 12h9" stroke="#d8d8d8" stroke-width=".6"/><path d="M8 1L0.800 8.200l1 1L8 3.200l6.200 6 1-1z" fill="#7a1c14"/><rect x="11" y="1.500" width="1.500" height="3" fill="#7a1c14"/><rect x="4.500" y="9" width="2.600" height="5.500" fill="#b08040" stroke="#7a5420" stroke-width=".5"/><rect x="8.800" y="8.800" width="3" height="2.800" fill="#4a90e0" stroke="#2a5aa8" stroke-width=".5"/></svg>
<span class="t fd" style="left:32.0px;top:520.3px;font-size:11px;line-height:16px;font-weight:bold;transform:scaleX(1.0122);">Home</span>
<div class="a nav" style="left:2px;top:540px;width:281px;height:24px;"></div>
<svg style="left:8px;top:543px" width="16" height="16" viewBox="0 0 16 16"><rect x="0.500" y="4.500" width="15" height="10.500" rx="1" fill="#b08238" stroke="#7e5a22"/><path d="M5.500 4.500v-2h5v2" fill="none" stroke="#6a4a1a" stroke-width="1.400"/><path d="M0.500 9h15" stroke="#8a6426"/><rect x="7" y="8" width="2" height="2.500" fill="#e8d08a"/></svg>
<span class="t fd" style="left:32.0px;top:544.3px;font-size:11px;line-height:16px;font-weight:bold;transform:scaleX(0.9864);">Portfolio</span>
<div class="a nav sel" style="left:2px;top:564px;width:281px;height:24px;"></div>
<svg style="left:8px;top:567px" width="16" height="16" viewBox="0 0 16 16"><rect x="0.500" y="3.500" width="13.500" height="11" fill="#6f8fe6" stroke="#3a52b8"/><rect x="1" y="4" width="12.500" height="2" fill="#5a78d8"/><circle cx="8.500" cy="8.800" r="3.500" fill="#eef2fd" stroke="#8ea6e0" stroke-width=".9"/><path d="M11.500 11.800l3 3" stroke="#c8961c" stroke-width="2.400" stroke-linecap="round"/></svg>
<span class="t fd" style="left:32.0px;top:568.3px;font-size:11px;line-height:16px;font-weight:bold;">Scans &amp; Favorites</span>
<div class="a nav" style="left:2px;top:588px;width:281px;height:24px;"></div>
<svg style="left:8px;top:591px" width="16" height="16" viewBox="0 0 16 16"><rect x="3.500" y="0.500" width="11.500" height="14.500" rx="1" fill="#c81c24" stroke="#7a1016"/><rect x="13.600" y="1" width="1.400" height="13.500" fill="#5a0c10"/><path d="M4 13.500h9.500" stroke="#f0e0d8" stroke-width="1"/><circle cx="8.800" cy="7" r="3" fill="none" stroke="#fff" stroke-width="1.100"/><circle cx="8.800" cy="7" r="1" fill="#fff"/><circle cx="1.800" cy="5" r="1.300" fill="none" stroke="#888" stroke-width=".9"/><circle cx="1.800" cy="9.500" r="1.300" fill="none" stroke="#888" stroke-width=".9"/></svg>
<span class="t fd" style="left:32.0px;top:592.3px;font-size:11px;line-height:16px;font-weight:bold;transform:scaleX(1.0134);">Fundamentals</span>
<div class="a nav" style="left:2px;top:612px;width:281px;height:24px;"></div>
<svg style="left:8px;top:615px" width="16" height="16" viewBox="0 0 16 16"><rect x="1" y="1.500" width="13.500" height="13.500" rx="1.200" fill="#dfe9fc" stroke="#6a8ad8"/><path d="M4 13.500V9.500M6 13.500v-3M8 13.500V8.500M12.300 13.500V7.500" stroke="#1b9a1b" stroke-width="1.200"/><path d="M10.200 13.500V5.500" stroke="#e81010" stroke-width="1.200"/></svg>
<span class="t fd" style="left:32.0px;top:616.3px;font-size:11px;line-height:16px;font-weight:bold;transform:scaleX(1.0082);">Charts</span>
<div class="a nav" style="left:2px;top:636px;width:281px;height:24px;"></div>
<svg style="left:8px;top:639px" width="16" height="16" viewBox="0 0 16 16"><path d="M1.500 1v12.500l1.500 1.500h12" fill="none" stroke="#3a4a9a" stroke-width="1.100"/><path d="M2 13.500l1.500 1.500" stroke="#3a4a9a"/><rect x="3" y="6.500" width="3.300" height="7" fill="#4a7ae8"/><rect x="7" y="1.500" width="3.300" height="12" fill="#e8c040" stroke="#a88820" stroke-width=".5"/><rect x="11" y="5" width="3.300" height="8.500" fill="#d83020"/><path d="M2.500 13l5-6 2.500 2.500 5-6.500" fill="none" stroke="#111" stroke-width="1.300"/></svg>
<span class="t fd" style="left:32.0px;top:640.3px;font-size:11px;line-height:16px;font-weight:bold;transform:scaleX(1.0185);">Market Overview</span>
<div class="a nav" style="left:2px;top:660px;width:281px;height:24px;"></div>
<svg style="left:8px;top:663px" width="16" height="16" viewBox="0 0 16 16"><circle cx="8" cy="8" r="7.300" fill="#3a96e0" stroke="#2a70b8"/><path d="M3 6.500c2-2.500 6-3 9-1.200-.8 1.600-2.800 1.200-3.800 2.600s.8 2.800-1 4.300c-2-.8-4.600-2.600-4.200-5.700z" fill="#12406e"/><path d="M2 8a6 6 0 0 0 12 0" fill="#1a5a98" opacity=".55"/><ellipse cx="7" cy="3.600" rx="3.800" ry="1.500" fill="#a8dcfa" opacity=".75"/></svg>
<span class="t fd" style="left:32.0px;top:664.3px;font-size:11px;line-height:16px;font-weight:bold;transform:scaleX(1.0467);">Browser</span>
<div class="a " style="left:2px;top:684px;width:280px;height:24px;background:linear-gradient(#ffffff,#f2f2f2);"></div>
<div class="a " style="left:283px;top:99px;width:1083px;height:609px;background:#fafafa;"></div>
<div class="a " style="left:1046px;top:99px;width:320px;height:1px;background:#a0a0a0;"></div>
<div class="a dot" style="left:287px;top:104px;width:759px;height:305px;"></div>
<div class="a dot" style="left:1046px;top:105px;width:315px;height:308px;"></div>
<div class="a dot" style="left:289px;top:413px;width:1076px;height:272px;"></div>
<div class="a dot" style="left:1046px;top:409px;width:319px;height:4px;"></div>
<div class="a " style="left:286px;top:103px;width:760px;height:1px;background:#a0a0a0;"></div>
<div class="a " style="left:1046px;top:104px;width:316px;height:1px;background:#a0a0a0;"></div>
<div class="a " style="left:286px;top:103px;width:1px;height:306px;background:#a0a0a0;"></div>
<div class="a " style="left:1361px;top:104px;width:1px;height:541px;background:#a0a0a0;"></div>
<div class="a " style="left:1362px;top:104px;width:3px;height:582px;background:#fbfbfb;"></div>
<div class="a " style="left:1365px;top:104px;width:1px;height:582px;background:#a8a8a8;"></div>
<div class="a " style="left:287px;top:104px;width:759px;height:27px;background:linear-gradient(#f0f0f0,#f6f6f6 40%,#fdfdfd);"></div>
<div class="a " style="left:1046px;top:105px;width:315px;height:27px;background:linear-gradient(#f0f0f0,#f6f6f6 40%,#fdfdfd);"></div>
<div class="a " style="left:1046px;top:132px;width:315px;height:1px;background:#a0a0a0;"></div>
<svg style="left:286px;top:104px" width="760" height="28" viewBox="0 0 760 28"><defs><linearGradient id="tg" x1="0" y1="0" x2="0" y2="1"><stop offset="0" stop-color="#ffffff"/><stop offset="1" stop-color="#f1f1f1"/></linearGradient></defs>
<g fill="url(#tg)" stroke="#8e8e8e" stroke-width="1">
<path d="M2 27.500L22 8.500H140.500Q142.500 8.500 142.500 10.500V27.500"/>
<path d="M142.500 27.500V10.500Q142.500 8.500 144.500 8.500H262Q264 8.500 264 10.500V27.500"/>
<path d="M264 27.500V10.500Q264 8.500 266 8.500H370Q372 8.500 372 10.500V27.500"/>
<path d="M372 27.500V10.500Q372 8.500 374 8.500H493L479 27.500" stroke="none"/>
<path d="M372 27.500V10.500Q372 8.500 374 8.500H493" fill="none"/>
</g>
<path d="M479 28L497 8.500H614.500Q616.500 8.500 616.500 10.500V28z" fill="#f4f4f4" stroke="none"/>
<path d="M479 27.500L497 8.500H614.500Q616.500 8.500 616.500 10.500V27.500" fill="none" stroke="#8e8e8e"/>
<path d="M0.500 27.500H479M616.500 27.500H760" stroke="#a0a0a0" fill="none"/>
</svg>
<span class="t fd" style="left:316.0px;top:114.8px;font-size:11px;line-height:16px;transform:scaleX(0.9758);">Predefined Scans (6)</span>
<span class="t fd" style="left:440.3px;top:114.8px;font-size:11px;line-height:16px;transform:scaleX(0.9546);">Composite Scans (0)</span>
<span class="t fd" style="left:562.5px;top:114.8px;font-size:11px;line-height:16px;transform:scaleX(0.9550);">Custom Scans (8)</span>
<span class="t fd" style="left:670.4px;top:114.8px;font-size:11px;line-height:16px;transform:scaleX(0.9651);">Create Custom Scan</span>
<span class="t fd" style="left:792.5px;top:114.8px;font-size:11px;line-height:16px;transform:scaleX(0.9622);">Create Custom Scan</span>
<svg style="left:1330px;top:110px" width="30" height="18" viewBox="0 0 30 18" fill="none" stroke="#000" stroke-width="1.100"><path d="M9.500 4.500v8.500l-4.500-4.250z"/><path d="M20.500 4.500v8.500l4.500-4.250z"/></svg>
<div class="a " style="left:478px;top:166px;width:568px;height:23px;background:#fff;"></div>
<div class="a sunk" style="left:357px;top:144px;width:13px;height:13px;"></div>
<span class="t fd" style="left:375.5px;top:143.8px;font-size:11px;line-height:16px;">Multi-TimeFrame Query</span>
<div class="a sunk" style="left:497px;top:144px;width:13px;height:13px;background:#f0f0f0;"></div>
<span class="t fd" style="left:515.2px;top:143.8px;font-size:11px;line-height:16px;color:#a8a8a8;transform:scaleX(0.9838);">Nested Brackets in Query</span>
<div class="a " style="left:726px;top:142px;width:50px;height:20px;border-radius:7px;border:1px solid #7c7c7c;background:#4f7399;box-shadow:inset 0 1px 2px rgba(0,0,0,.4);"></div>
<div class="a " style="left:748px;top:143px;width:27px;height:18px;border-radius:6px;border:1px solid #7a7a7a;background:linear-gradient(#e6e6e6,#c4c4c4);"></div>
<span class="t fl" style="left:730.5px;top:144.0px;font-size:11.5px;line-height:16px;color:#fff;transform:scaleX(0.8977);">IEL</span>
<div class="a sunk" style="left:305px;top:171px;width:12px;height:12px;"></div>
<span class="t fd" style="left:323.5px;top:170.3px;font-size:11px;line-height:16px;transform:scaleX(0.9705);">HA</span>
<div class="a " style="left:348px;top:167px;width:108px;height:20px;background:#fff;border:1px solid #7a7a7a;"></div>
<div class="a " style="left:352.8px;top:170px;width:80.5px;height:12px;background:#0078d7;"></div>
<div class="a " style="left:433.3px;top:170px;width:1px;height:12px;background:#e88a1a;"></div>
<span class="t fd" style="left:353.5px;top:168.8px;font-size:11px;line-height:16px;color:#fff;transform:scaleX(0.9504);">Auto-Divergence</span>
<div class="a pop" style="left:348px;top:187px;width:108px;height:154px;"><svg style="right:0;bottom:0" width="17" height="17" viewBox="0 0 17 17"><path d="M17 0V17H0z" fill="#ececec"/><g fill="#b6b6b6"><rect x="12" y="12" width="2" height="2"/><rect x="9" y="12" width="2" height="2"/><rect x="6" y="12" width="2" height="2"/><rect x="12" y="9" width="2" height="2"/><rect x="9" y="9" width="2" height="2"/><rect x="12" y="6" width="2" height="2"/></g></svg></div>
<div class="a " style="left:349px;top:188.0px;width:106px;height:19px;background:#0078d7;"></div>
<span class="t fl" style="left:357.4px;top:189.5px;font-size:11.6px;line-height:16px;color:#fff;transform:scaleX(1.0410);">Auto-Divergence</span>
<span class="t fl" style="left:357.4px;top:208.5px;font-size:11.6px;line-height:16px;transform:scaleX(0.9948);">Auto-SR</span>
<span class="t fl" style="left:357.4px;top:227.5px;font-size:11.6px;line-height:16px;transform:scaleX(1.0684);">Auto-Trendline</span>
<span class="t fl" style="left:357.4px;top:246.5px;font-size:11.6px;line-height:16px;transform:scaleX(1.0060);">Candlestick</span>
<span class="t fl" style="left:357.4px;top:265.5px;font-size:11.6px;line-height:16px;transform:scaleX(1.0412);">Indicator</span>
<span class="t fl" style="left:357.4px;top:284.5px;font-size:11.6px;line-height:16px;transform:scaleX(0.9151);">IQL</span>
<span class="t fl" style="left:357.4px;top:303.5px;font-size:11.6px;line-height:16px;transform:scaleX(1.0448);">Price-Action</span>
<span class="t fl" style="left:461.5px;top:169.0px;font-size:12px;line-height:16px;transform:scaleX(0.9839);">: (</span>
<span class="t fl" style="left:482.8px;top:170.7px;font-size:13px;line-height:16px;transform:scaleX(0.9748);">Divergence of</span>
<div class="a " style="left:580px;top:169px;width:76px;height:20px;background:#fff;border:1px solid #7a7a7a;"></div>
<div class="a " style="left:585px;top:172.5px;width:19px;height:11.5px;background:#0078d7;"></div>
<div class="a " style="left:604px;top:172.5px;width:1px;height:11.5px;background:#e88a1a;"></div>
<span class="t fd" style="left:586.0px;top:171.1px;font-size:11px;line-height:16px;color:#fff;transform:scaleX(1.0448);">CCI</span>
<div class="a pop" style="left:580px;top:189px;width:76px;height:97px;"><svg style="right:0;bottom:0" width="17" height="17" viewBox="0 0 17 17"><path d="M17 0V17H0z" fill="#ececec"/><g fill="#b6b6b6"><rect x="12" y="12" width="2" height="2"/><rect x="9" y="12" width="2" height="2"/><rect x="6" y="12" width="2" height="2"/><rect x="12" y="9" width="2" height="2"/><rect x="9" y="9" width="2" height="2"/><rect x="12" y="6" width="2" height="2"/></g></svg></div>
<span class="t fl" style="left:589.7px;top:191.5px;font-size:11.6px;line-height:16px;transform:scaleX(0.9064);">CCI</span>
<span class="t fl" style="left:589.7px;top:210.5px;font-size:11.6px;line-height:16px;transform:scaleX(0.9842);">MACD</span>
<span class="t fl" style="left:589.7px;top:229.5px;font-size:11.6px;line-height:16px;transform:scaleX(0.7709);">RSI</span>
<span class="t fl" style="left:589.7px;top:248.5px;font-size:11.6px;line-height:16px;transform:scaleX(0.9876);">SlowStoch</span>
<span class="t fl" style="left:662.0px;top:170.5px;font-size:13px;line-height:16px;">.</span>
<div class="a " style="left:667px;top:171px;width:63px;height:20px;background:#fff;border:1px solid #7a7a7a;border-left:none;border-bottom:none;"></div>
<div class="a " style="left:670.4px;top:174px;width:34.0px;height:11.5px;background:#0078d7;"></div>
<div class="a " style="left:704.4px;top:174px;width:1px;height:11.5px;background:#e88a1a;"></div>
<span class="t fd" style="left:671.0px;top:172.6px;font-size:11px;line-height:16px;color:#fff;transform:scaleX(0.9391);">Hidden</span>
<div class="a pop" style="left:667px;top:191px;width:63px;height:59px;border-left:none;"><svg style="right:0;bottom:0" width="17" height="17" viewBox="0 0 17 17"><path d="M17 0V17H0z" fill="#ececec"/><g fill="#b6b6b6"><rect x="12" y="12" width="2" height="2"/><rect x="9" y="12" width="2" height="2"/><rect x="6" y="12" width="2" height="2"/><rect x="12" y="9" width="2" height="2"/><rect x="9" y="9" width="2" height="2"/><rect x="12" y="6" width="2" height="2"/></g></svg></div>
<span class="t fl" style="left:675.5px;top:194.0px;font-size:11.6px;line-height:16px;transform:scaleX(1.0476);">Hidden</span>
<span class="t fl" style="left:675.5px;top:213.0px;font-size:11.6px;line-height:16px;transform:scaleX(0.9727);">Regular</span>
<div class="a " style="left:734px;top:171px;width:63px;height:20px;background:#fff;border-right:1px solid #7a7a7a;"></div>
<div class="a " style="left:734.5px;top:174px;width:42.10000000000002px;height:11.5px;background:#0078d7;"></div>
<div class="a " style="left:776.6px;top:174px;width:1px;height:11.5px;background:#e88a1a;"></div>
<span class="t fd" style="left:735.5px;top:172.6px;font-size:11px;line-height:16px;color:#fff;transform:scaleX(0.9354);">negative</span>
<div class="a pop" style="left:734px;top:191px;width:63px;height:59px;border-left:none;"><svg style="right:0;bottom:0" width="17" height="17" viewBox="0 0 17 17"><path d="M17 0V17H0z" fill="#ececec"/><g fill="#b6b6b6"><rect x="12" y="12" width="2" height="2"/><rect x="9" y="12" width="2" height="2"/><rect x="6" y="12" width="2" height="2"/><rect x="12" y="9" width="2" height="2"/><rect x="9" y="9" width="2" height="2"/><rect x="12" y="6" width="2" height="2"/></g></svg></div>
<span class="t fl" style="left:739.2px;top:194.0px;font-size:11.6px;line-height:16px;">negative</span>
<span class="t fl" style="left:739.2px;top:213.0px;font-size:11.6px;line-height:16px;transform:scaleX(1.0073);">positive</span>
<span class="t fl" style="left:802.5px;top:169.5px;font-size:13px;line-height:16px;">)</span>
<div class="a " style="left:818px;top:168px;width:88px;height:20px;background:#fff;border:1px solid #7a7a7a;"></div>
<div class="a " style="left:822.5px;top:171px;width:62.0px;height:11.5px;background:#0078d7;"></div>
<div class="a " style="left:884.5px;top:171px;width:1px;height:11.5px;background:#e88a1a;"></div>
<span class="t fd" style="left:823.0px;top:169.6px;font-size:11px;line-height:16px;color:#fff;transform:scaleX(0.9506);">within 2 bars</span>
<div class="a pop" style="left:818px;top:188px;width:88px;height:116px;"><svg style="right:0;bottom:0" width="17" height="17" viewBox="0 0 17 17"><path d="M17 0V17H0z" fill="#ececec"/><g fill="#b6b6b6"><rect x="12" y="12" width="2" height="2"/><rect x="9" y="12" width="2" height="2"/><rect x="6" y="12" width="2" height="2"/><rect x="12" y="9" width="2" height="2"/><rect x="9" y="9" width="2" height="2"/><rect x="12" y="6" width="2" height="2"/></g></svg></div>
<span class="t fl" style="left:827.4px;top:190.7px;font-size:11.6px;line-height:16px;transform:scaleX(1.0231);">within 2 bars</span>
<span class="t fl" style="left:827.4px;top:209.7px;font-size:11.6px;line-height:16px;transform:scaleX(1.0231);">within 3 bars</span>
<span class="t fl" style="left:827.4px;top:228.7px;font-size:11.6px;line-height:16px;transform:scaleX(1.0231);">within 4 bars</span>
<span class="t fl" style="left:827.4px;top:247.7px;font-size:11.6px;line-height:16px;transform:scaleX(1.0231);">within 5 bars</span>
<span class="t fl" style="left:827.4px;top:266.7px;font-size:11.6px;line-height:16px;transform:scaleX(1.0231);">within 6 bars</span>
<div class="a " style="left:912px;top:168px;width:45px;height:20px;background:#fff;border:1px solid #7a7a7a;"></div>
<span class="t fd" style="left:917.0px;top:170.3px;font-size:11px;line-height:16px;transform:scaleX(1.0900);">--</span>
<div class="a " style="left:282px;top:409px;width:764px;height:4px;background:#fff;"></div>
<div class="a " style="left:283px;top:413px;width:5px;height:295px;background:#fafafa;"></div>
<div class="a " style="left:288px;top:413px;width:1px;height:273px;background:#a0a0a0;"></div>
<div class="a " style="left:289px;top:413px;width:3px;height:272px;background:#f0f0f0;"></div>
<div class="a " style="left:292px;top:413px;width:1px;height:232px;background:#a0a0a0;"></div>
<div class="a " style="left:292px;top:644px;width:1070px;height:1px;background:#a0a0a0;"></div>
<div class="a " style="left:288px;top:685px;width:1078px;height:1px;background:#a0a0a0;"></div>
<span class="t fd" style="left:332.3px;top:560.8px;font-size:11px;line-height:16px;transform:scaleX(0.9759);">Name</span>
<div class="a sunk" style="left:371px;top:562px;width:422px;height:18px;"></div>
<span class="t fd" style="left:307.5px;top:590.8px;font-size:11px;line-height:16px;transform:scaleX(0.9792);">Description</span>
<div class="a sunk" style="left:371px;top:584px;width:422px;height:52px;"></div>
<div class="a " style="left:776px;top:586px;width:16px;height:49px;background:#f0f0f0;"></div>
<svg style="left:776px;top:586px" width="16" height="49" viewBox="0 0 16 49" fill="none" stroke="#b4b4b4" stroke-width="1.200"><path d="M4 11l3.500-3.500L11 11"/><path d="M4 38l3.500 3.500L11 38"/></svg>
<div class="a " style="left:832px;top:558px;width:179px;height:51px;border:1px solid #a6a6a6;box-shadow:inset 1px 1px 0 #fff,1px 1px 0 #fff;"></div>
<div class="a dot" style="left:840px;top:553px;width:63px;height:12px;"></div>
<span class="t fd" style="left:842.0px;top:552.8px;font-size:11px;line-height:16px;transform:scaleX(1.0492);">Result Type</span>
<svg style="left:846px;top:581px" width="110" height="14" viewBox="0 0 110 14"><circle cx="7" cy="7" r="5.500" fill="#fff" stroke="#cfcfcf"/><path d="M3.200 10.800A5.500 5.500 0 0 1 10.800 3.200" fill="none" stroke="#555" stroke-width="1.200"/><circle cx="97.600" cy="7" r="5.500" fill="#fff" stroke="#cfcfcf"/><path d="M93.800 10.800A5.500 5.500 0 0 1 101.400 3.200" fill="none" stroke="#555" stroke-width="1.200"/><circle cx="97.600" cy="7" r="2" fill="#000"/></svg>
<span class="t fd" style="left:864.2px;top:580.8px;font-size:11px;line-height:16px;">Bullish</span>
<span class="t fd" style="left:955.3px;top:580.8px;font-size:11px;line-height:16px;transform:scaleX(0.9784);">Bearish</span>
<div class="a btn" style="left:799px;top:654px;width:70px;height:22px;"></div>
<span class="t fd" style="left:821.2px;top:657.6px;font-size:11px;line-height:16px;transform:scaleX(0.9919);">Save</span>
<div class="a btn" style="left:875px;top:654px;width:70px;height:22px;"></div>
<span class="t fd" style="left:893.4px;top:657.6px;font-size:11px;line-height:16px;transform:scaleX(0.9599);">Cancel</span>
<div class="a " style="left:289px;top:686px;width:1077px;height:22px;background:#fbfbfb;"></div>
<div class="a " style="left:290px;top:688px;width:99.5px;height:22px;border:1px solid #9a9a9a;border-radius:5px 5px 0 0;background:linear-gradient(#ffffff,#f2f2f2);"></div>
<svg style="left:293px;top:690px" width="16" height="16" viewBox="0 0 16 16"><rect x="4" y="0.500" width="9.500" height="7.500" fill="#2f46cc" stroke="#1c2c8a" stroke-width=".8"/><path d="M5.500 3h6.500M5.500 5h6.500" stroke="#dfe6ff" stroke-width=".9"/><rect x="0.500" y="4.500" width="8.500" height="6" fill="#f4f6ff" stroke="#1c2c8a" stroke-width=".8"/><path d="M1 5.500h7.500" stroke="#3a5ad8" stroke-width="1.400"/><rect x="7" y="7" width="8.500" height="6" fill="#f4f6ff" stroke="#1c2c8a" stroke-width=".8"/><path d="M7.500 8h7.500" stroke="#3a5ad8" stroke-width="1.400"/><path d="M8.500 10.500h5" stroke="#3a5ad8" stroke-width=".8"/><rect x="0.500" y="9.500" width="8.500" height="6" fill="#f4f6ff" stroke="#1c2c8a" stroke-width=".8"/><path d="M1 10.500h7.500" stroke="#3a5ad8" stroke-width="1.400"/><path d="M2 13h5" stroke="#3a5ad8" stroke-width=".8"/></svg>
<span class="t fl" style="left:316.2px;top:690.0px;font-size:11.5px;line-height:16px;color:#7c7c7c;transform:scaleX(0.9848);">Alerts Criteria</span>
<div class="a " style="left:390px;top:688px;width:87px;height:22px;border:1px solid #9a9a9a;border-radius:5px 5px 0 0;background:linear-gradient(#ffffff,#f2f2f2);"></div>
<svg style="left:393px;top:690px" width="16" height="16" viewBox="0 0 16 16"><rect x="4" y="0.500" width="9.500" height="7.500" fill="#2f46cc" stroke="#1c2c8a" stroke-width=".8"/><path d="M5.500 3h6.500M5.500 5h6.500" stroke="#dfe6ff" stroke-width=".9"/><rect x="0.500" y="4.500" width="8.500" height="6" fill="#f4f6ff" stroke="#1c2c8a" stroke-width=".8"/><path d="M1 5.500h7.500" stroke="#3a5ad8" stroke-width="1.400"/><rect x="7" y="7" width="8.500" height="6" fill="#f4f6ff" stroke="#1c2c8a" stroke-width=".8"/><path d="M7.500 8h7.500" stroke="#3a5ad8" stroke-width="1.400"/><path d="M8.500 10.500h5" stroke="#3a5ad8" stroke-width=".8"/><rect x="0.500" y="9.500" width="8.500" height="6" fill="#f4f6ff" stroke="#1c2c8a" stroke-width=".8"/><path d="M1 10.500h7.500" stroke="#3a5ad8" stroke-width="1.400"/><path d="M2 13h5" stroke="#3a5ad8" stroke-width=".8"/></svg>
<span class="t fl" style="left:415.4px;top:690.0px;font-size:11.5px;line-height:16px;color:#7c7c7c;transform:scaleX(0.9781);">Price Alerts</span>
<div class="a " style="left:477.7px;top:688px;width:87.30000000000001px;height:22px;border:1px solid #9a9a9a;border-radius:5px 5px 0 0;background:linear-gradient(#ffffff,#f2f2f2);"></div>
<svg style="left:480.5px;top:690px" width="16" height="16" viewBox="0 0 16 16"><rect x="4" y="0.500" width="9.500" height="7.500" fill="#2f46cc" stroke="#1c2c8a" stroke-width=".8"/><path d="M5.500 3h6.500M5.500 5h6.500" stroke="#dfe6ff" stroke-width=".9"/><rect x="0.500" y="4.500" width="8.500" height="6" fill="#f4f6ff" stroke="#1c2c8a" stroke-width=".8"/><path d="M1 5.500h7.500" stroke="#3a5ad8" stroke-width="1.400"/><rect x="7" y="7" width="8.500" height="6" fill="#f4f6ff" stroke="#1c2c8a" stroke-width=".8"/><path d="M7.500 8h7.500" stroke="#3a5ad8" stroke-width="1.400"/><path d="M8.500 10.500h5" stroke="#3a5ad8" stroke-width=".8"/><rect x="0.500" y="9.500" width="8.500" height="6" fill="#f4f6ff" stroke="#1c2c8a" stroke-width=".8"/><path d="M1 10.500h7.500" stroke="#3a5ad8" stroke-width="1.400"/><path d="M2 13h5" stroke="#3a5ad8" stroke-width=".8"/></svg>
<span class="t fl" style="left:503.4px;top:690.0px;font-size:11.5px;line-height:16px;color:#7c7c7c;transform:scaleX(0.9644);">Scan Alerts</span>
<div class="a " style="left:565.7px;top:688px;width:103.69999999999993px;height:22px;border:1px solid #9a9a9a;border-radius:5px 5px 0 0;background:linear-gradient(#ffffff,#f2f2f2);"></div>
<svg style="left:568.5px;top:690px" width="16" height="16" viewBox="0 0 16 16"><rect x="4" y="0.500" width="9.500" height="7.500" fill="#2f46cc" stroke="#1c2c8a" stroke-width=".8"/><path d="M5.500 3h6.500M5.500 5h6.500" stroke="#dfe6ff" stroke-width=".9"/><rect x="0.500" y="4.500" width="8.500" height="6" fill="#f4f6ff" stroke="#1c2c8a" stroke-width=".8"/><path d="M1 5.500h7.500" stroke="#3a5ad8" stroke-width="1.400"/><rect x="7" y="7" width="8.500" height="6" fill="#f4f6ff" stroke="#1c2c8a" stroke-width=".8"/><path d="M7.500 8h7.500" stroke="#3a5ad8" stroke-width="1.400"/><path d="M8.500 10.500h5" stroke="#3a5ad8" stroke-width=".8"/><rect x="0.500" y="9.500" width="8.500" height="6" fill="#f4f6ff" stroke="#1c2c8a" stroke-width=".8"/><path d="M1 10.500h7.500" stroke="#3a5ad8" stroke-width="1.400"/><path d="M2 13h5" stroke="#3a5ad8" stroke-width=".8"/></svg>
<span class="t fl" style="left:591.8px;top:690.0px;font-size:11.5px;line-height:16px;color:#7c7c7c;transform:scaleX(0.9669);">Portfolio Alerts</span>
<div class="a " style="left:670px;top:688px;width:127.5px;height:22px;border:1px solid #9a9a9a;border-radius:5px 5px 0 0;background:linear-gradient(#ffffff,#f2f2f2);"></div>
<svg style="left:673px;top:690px" width="16" height="16" viewBox="0 0 16 16"><rect x="4" y="0.500" width="9.500" height="7.500" fill="#2f46cc" stroke="#1c2c8a" stroke-width=".8"/><path d="M5.500 3h6.500M5.500 5h6.500" stroke="#dfe6ff" stroke-width=".9"/><rect x="0.500" y="4.500" width="8.500" height="6" fill="#f4f6ff" stroke="#1c2c8a" stroke-width=".8"/><path d="M1 5.500h7.500" stroke="#3a5ad8" stroke-width="1.400"/><rect x="7" y="7" width="8.500" height="6" fill="#f4f6ff" stroke="#1c2c8a" stroke-width=".8"/><path d="M7.500 8h7.500" stroke="#3a5ad8" stroke-width="1.400"/><path d="M8.500 10.500h5" stroke="#3a5ad8" stroke-width=".8"/><rect x="0.500" y="9.500" width="8.500" height="6" fill="#f4f6ff" stroke="#1c2c8a" stroke-width=".8"/><path d="M1 10.500h7.500" stroke="#3a5ad8" stroke-width="1.400"/><path d="M2 13h5" stroke="#3a5ad8" stroke-width=".8"/></svg>
<span class="t fl" style="left:695.0px;top:690.0px;font-size:11.5px;line-height:16px;color:#7c7c7c;transform:scaleX(0.9587);">Order Management</span>
<div class="a " style="left:516px;top:362px;width:412px;height:113px;background:#dff142;border:2px solid #000;border-radius:9px;box-shadow:0 0 0 1px rgba(255,255,255,.85);"></div>
<span class="t fl" style="left:526.0px;top:375.2px;font-size:22px;line-height:28px;font-weight:bold;transform:scaleX(0.9755);">Create sophisticated Auto-Divergence</span>
<span class="t fl" style="left:600.8px;top:404.6px;font-size:22px;line-height:28px;font-weight:bold;transform:scaleX(0.9682);">scans without worrying</span>
<span class="t fl" style="left:593.5px;top:434.0px;font-size:22px;line-height:28px;font-weight:bold;">about the inbuilt formula</span>
</div>
</body></html>
